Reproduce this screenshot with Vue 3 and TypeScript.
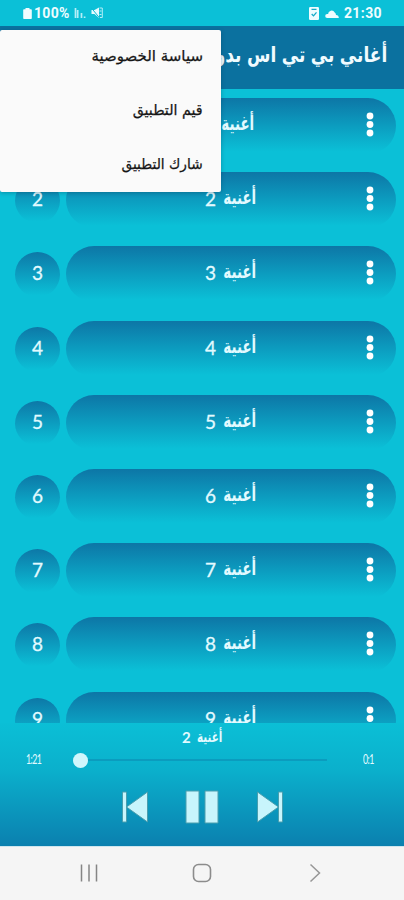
<script setup lang="ts">
interface Song {
  id: number
  word: string
}
interface MenuItem {
  label: string
  stretch: number
}

const songs: Song[] = Array.from({ length: 9 }, (_, i) => ({ id: i + 1, word: 'أغنية' }))
const menuItems: MenuItem[] = [
  { label: 'سياسة الخصوصية', stretch: 1 },
  { label: 'قيم التطبيق', stretch: 0.95 },
  { label: 'شارك التطبيق', stretch: 0.915 },
]
</script>

<template>
  <div class="screen">
    <header class="status">
      <div class="status-left">
        <svg width="9" height="13" viewBox="0 0 9 13"><path d="M2.5 1h4v1.2H8q.8 0 .8.8v8.2q0 .8-.8.8H1q-.8 0-.8-.8V3q0-.8.8-.8h1.5z" fill="#effcff" /></svg>
        <b class="battery">100%</b>
        <svg class="signal" width="12" height="12" viewBox="0 0 12 12"><path d="M1.5 1v10M3.7 3v8M7.5 6v5M10.6 9.5V11" stroke="#b5eef7" stroke-width="1.7" fill="none" /></svg>
        <svg class="mute" width="12" height="12" viewBox="0 0 12 12">
          <path d="M.5 3h3L8 .5v10.500L3.500 7H.5z" fill="#e6faff" />
          <path d="M8.500 1h2.800v9.500H8.500M8.500 4h2M8.500 7.500h2" fill="none" stroke="#b5eef7" stroke-width="1" />
          <path d="M0 .5l9 11" stroke="#0bb9d2" stroke-width="1" />
        </svg>
      </div>
      <div class="status-right">
        <svg width="10" height="13" viewBox="0 0 10 13"><rect width="10" height="13" rx="1.2" fill="#effcff" /><path d="M2.7 7l1.8 1.9 3-3.5M2.500 2.300h5" fill="none" stroke="#14aac8" stroke-width="1.3" /></svg>
        <svg class="cloud" width="14" height="9" viewBox="0 0 14 9"><path d="M2.200 9a2 2 0 010-4q.5 0 .9.1A3.500 3.500 0 019.700 3.500 3 3 0 0111 6q2.800 0 2.800 3z" fill="#effcff" /></svg>
        <b class="clock">21:30</b>
      </div>
    </header>

    <div class="appbar"><h1>أغاني بي تي اس بدون نت</h1></div>

    <main class="list">
      <div v-for="song in songs" :key="song.id" class="row">
        <div class="badge"><span>{{ song.id }}</span></div>
        <div class="pill" :class="{ first: song.id === 1 }">
          <span class="digit">{{ song.id }}</span>
          <span class="word">{{ song.word }}</span>
          <svg class="dots" width="8" height="26" viewBox="0 0 8 26" fill="#fff"><circle cx="4" cy="4" r="3.4" /><circle cx="4" cy="12.500" r="3.4" /><circle cx="4" cy="21" r="3.4" /></svg>
        </div>
      </div>
    </main>

    <section class="player">
      <div class="now"><span class="now-digit">2</span><span class="now-word">أغنية</span></div>
      <div class="progress">
        <div class="elapsed"><span class="time">1:21</span></div>
        <div class="track"><i class="thumb"></i></div>
        <div class="total"><span class="time">0:1</span></div>
      </div>
      <div class="controls">
        <svg width="28" height="34" viewBox="0 0 28 34"><path d="M1.500 2h4v30h-4zM26.500 2v30L5.500 17z" fill="#c8f5fc" stroke="#4a9eae" stroke-width="1" /></svg>
        <svg width="34" height="34" viewBox="0 0 34 34"><path d="M1 1h13v32H1zM20 1h13v32H20z" fill="#c8f5fc" stroke="#4a9eae" stroke-width="1" /></svg>
        <svg width="28" height="34" viewBox="0 0 28 34"><path d="M22.500 2h4v30h-4zM1.500 2v30l21-15z" fill="#c8f5fc" stroke="#4a9eae" stroke-width="1" /></svg>
      </div>
    </section>

    <nav class="nav">
      <svg width="20" height="20" viewBox="0 0 20 20"><path d="M2.500 1.500v17M10 1.500v17M17.500 1.500v17" stroke="#858585" stroke-width="1.5" /></svg>
      <svg width="20" height="20" viewBox="0 0 20 20"><rect x="1.500" y="1.500" width="17" height="17" rx="5" fill="none" stroke="#8c8c8c" stroke-width="1.6" /></svg>
      <svg width="20" height="20" viewBox="0 0 20 20"><path d="M5.500 1.500l9 8.500-9 8.500" fill="none" stroke="#969696" stroke-width="1.5" /></svg>
    </nav>

    <div class="menu">
      <div v-for="item in menuItems" :key="item.label" class="menu-item">
        <span :style="{ transform: `scaleX(${item.stretch})` }">{{ item.label }}</span>
      </div>
    </div>
  </div>
</template>

<style>
body {
  margin: 0;
}
</style>

<style scoped>
.screen {
  position: relative;
  width: 404px;
  height: 900px;
  overflow: hidden;
  display: flex;
  flex-direction: column;
  background: #0bc0d7;
  color: #e2faff;
  font-family: "DejaVu Sans", sans-serif;
}
.status {
  height: 26px;
  flex: none;
  box-sizing: border-box;
  padding: 0 22px 0 23px;
  display: flex;
  justify-content: space-between;
  align-items: center;
  font-family: Roboto, sans-serif;
}
.status-left,
.status-right {
  display: flex;
  align-items: center;
}
.status b {
  font-size: 14px;
  font-weight: 700;
  color: #effcff;
}
.battery {
  margin-left: 2px;
  letter-spacing: 0.3px;
}
.status .clock {
  letter-spacing: 0.4px;
}
.signal {
  margin-left: 4px;
}
.mute {
  margin-left: 5px;
}
.cloud {
  margin: 0 5px 0 6px;
}
.appbar {
  height: 63px;
  flex: none;
  box-sizing: border-box;
  padding: 0 17px 5px 0;
  background: #0b719f;
  display: flex;
  justify-content: flex-end;
  align-items: center;
}
h1 {
  margin: 0;
  direction: rtl;
  white-space: nowrap;
  font-size: 20px;
  line-height: 30px;
  font-weight: 700;
  word-spacing: -0.5px;
  color: #f0fbff;
  transform: scale(0.85, 1.06);
  transform-origin: right center;
}
.list {
  flex: none;
  height: 634px;
  box-sizing: border-box;
  padding-top: 9px;
  overflow: hidden;
}
.row {
  height: 74.2px;
  display: flex;
  padding-left: 15px;
  gap: 6px;
}
.badge {
  width: 45px;
  height: 45px;
  margin-top: 6px;
  border-radius: 50%;
  background: linear-gradient(#0d78a7, #0bc0d7 96%);
  display: flex;
  align-items: center;
  justify-content: center;
  font: 19px/22px Lato, sans-serif;
  -webkit-text-stroke: 0.3px #e2faff;
}
.badge span {
  margin-bottom: 3px;
}
.pill {
  width: 330px;
  height: 56px;
  border-radius: 28px;
  background: linear-gradient(#0d76a6, #0bc0d7 96%);
  display: grid;
  grid-template-columns: 139px 18px 33px 110px 8px;
  align-items: start;
}
.pill.first {
  grid-template-columns: 137px 18px 33px 112px 8px;
}
.digit {
  grid-column: 2;
  margin-top: 16px;
  font: 19px/22px Lato, sans-serif;
  -webkit-text-stroke: 0.3px #e2faff;
}
.word {
  grid-column: 3;
  justify-self: end;
  direction: rtl;
  white-space: nowrap;
  margin-top: 14px;
  font-size: 16px;
  line-height: 24px;
  font-weight: 700;
  transform: scale(0.84, 1.22);
  transform-origin: right center;
}
.dots {
  grid-column: 5;
  margin-top: 14px;
}
.player {
  height: 123px;
  flex: none;
  background: linear-gradient(#0bbfd6, #0bb0cc 38%, #0b80af);
}
.now {
  height: 28px;
  display: flex;
  justify-content: center;
  align-items: center;
  gap: 6px;
  font-weight: 700;
}
.now-digit {
  margin-left: 4px;
  font: 700 15px/20px Lato, sans-serif;
}
.now-word {
  direction: rtl;
  font-size: 12px;
  transform: scale(0.86, 1.22);
  transform-origin: left center;
}
.progress {
  height: 18px;
  display: flex;
  align-items: center;
  padding: 0 26px;
  font: 12px/16px Lato, sans-serif;
}
.time {
  display: inline-block;
  letter-spacing: -0.8px;
  transform: scale(0.74, 1.08);
  transform-origin: left center;
}
.elapsed {
  width: 54px;
}
.track {
  width: 250px;
  height: 2px;
  background: #0b9cbe;
}
.thumb {
  display: block;
  width: 15px;
  height: 15px;
  margin: -6.5px 0 0 -7px;
  border-radius: 50%;
  background: #d0f6fc;
}
.total {
  margin-left: 36px;
}
.controls {
  display: flex;
  justify-content: center;
  align-items: center;
  gap: 36.5px;
  padding-top: 21px;
}
.nav {
  height: 54px;
  flex: none;
  box-sizing: border-box;
  padding: 0 79px 2px;
  background: #f5f5f5;
  border-top: 1px solid #cfe6ee;
  display: flex;
  justify-content: space-between;
  align-items: center;
}
.menu {
  position: absolute;
  left: 0;
  top: 30px;
  width: 221px;
  height: 162px;
  border-radius: 2px;
  background: #fafafa;
  box-shadow: 0 1px 4px rgba(0, 50, 80, 0.35);
  color: #161616;
}
.menu-item {
  height: 54px;
  box-sizing: border-box;
  direction: rtl;
  padding: 0 18px 2px 0;
  display: flex;
  align-items: center;
  white-space: nowrap;
  font-size: 15px;
  -webkit-text-stroke: 0.25px #161616;
}
.menu-item span {
  transform-origin: right center;
}
</style>
